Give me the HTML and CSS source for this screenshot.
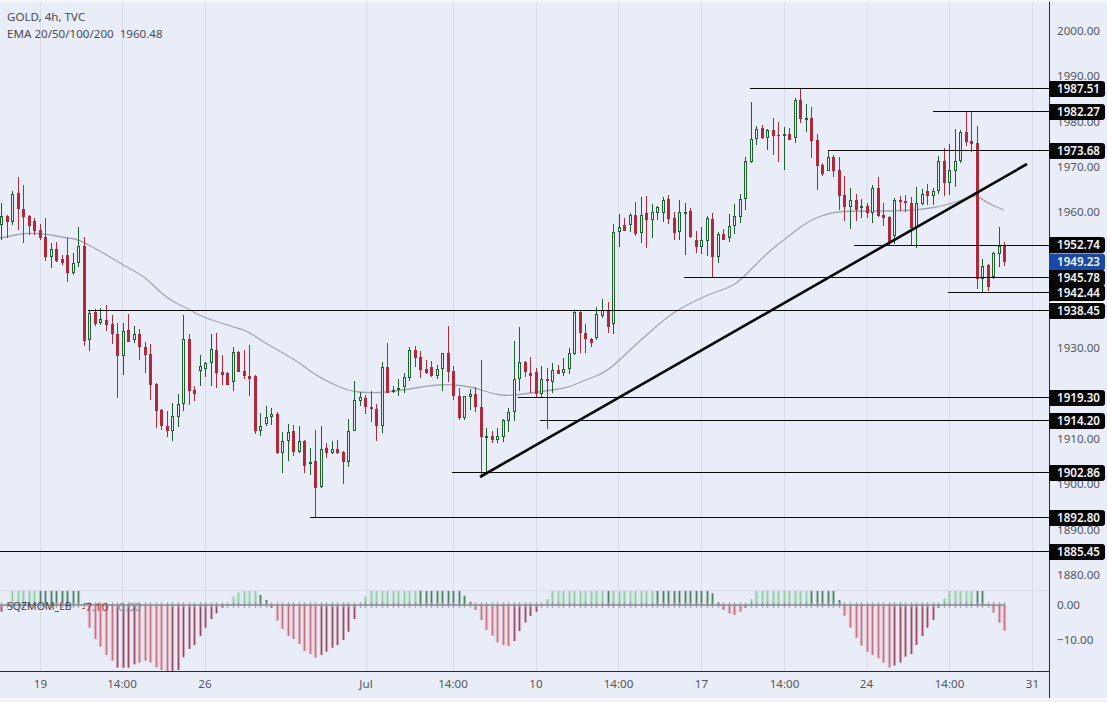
FILE: index.html
```html
<!DOCTYPE html>
<html lang="en">
<head>
<meta charset="utf-8">
<title>GOLD, 4h, TVC</title>
<link rel="stylesheet" href="styles.css">
</head>
<body>
<main class="chart">
  <section class="plot">
    <svg id="plot-svg" class="plot-svg" viewBox="0 2 1049 669" width="1049" height="669" xmlns="http://www.w3.org/2000/svg">
      <g id="grid" class="grid"></g>
      <path class="grid" d="M0 590.5H1049"/>
      <g id="hist"></g>
      <path id="ema" class="ema"/>
      <g id="wicks"></g>
      <g id="bodies"></g>
      <g id="levels" class="level"></g>
      <path class="trend" d="M480 477L1027 164"/>
    </svg>
    <div class="legend">
      <div class="legend-line">GOLD, 4h, TVC</div>
      <div class="legend-line">EMA 20/50/100/200&nbsp; 1960.48</div>
    </div>
    <div class="osc-legend"><span class="osc-name">SQZMOM_LB</span><span class="osc-red">-7.10</span><span class="osc-gray">0.00</span></div>
  </section>
  <aside class="price-axis">
    <span class="tick" style="top:29px">2000.00</span>
    <span class="tick" style="top:74px">1990.00</span>
    <span class="tick" style="top:120px">1980.00</span>
    <span class="tick" style="top:165px">1970.00</span>
    <span class="tick" style="top:210px">1960.00</span>
    <span class="tick" style="top:346px">1930.00</span>
    <span class="tick" style="top:437px">1910.00</span>
    <span class="tick" style="top:482px">1900.00</span>
    <span class="tick" style="top:528px">1890.00</span>
    <span class="tick" style="top:573px">1880.00</span>
    <span class="tick" style="top:603px">0.00</span>
    <span class="tick" style="top:638px">−10.00</span>
    <span class="flag" style="top:87px">1987.51</span>
    <span class="flag" style="top:109.5px">1982.27</span>
    <span class="flag" style="top:148.5px">1973.68</span>
    <span class="flag" style="top:243px">1952.74</span>
    <span class="flag flag-last" style="top:259.5px">1949.23</span>
    <span class="flag" style="top:275.5px">1945.78</span>
    <span class="flag" style="top:290.5px">1942.44</span>
    <span class="flag flag-ring" style="top:309px">1938.45</span>
    <span class="flag" style="top:395.5px">1919.30</span>
    <span class="flag" style="top:419px">1914.20</span>
    <span class="flag" style="top:470.5px">1902.86</span>
    <span class="flag" style="top:515.5px">1892.80</span>
    <span class="flag" style="top:549.5px">1885.45</span>
  </aside>
  <footer class="time-axis">
    <span class="time" style="left:40.5px">19</span>
    <span class="time" style="left:122px">14:00</span>
    <span class="time" style="left:205px">26</span>
    <span class="time" style="left:366px">Jul</span>
    <span class="time" style="left:453px">14:00</span>
    <span class="time" style="left:536px">10</span>
    <span class="time" style="left:618.5px">14:00</span>
    <span class="time" style="left:701.5px">17</span>
    <span class="time" style="left:784.5px">14:00</span>
    <span class="time" style="left:866.5px">24</span>
    <span class="time" style="left:949.5px">14:00</span>
    <span class="time" style="left:1032.5px">31</span>
  </footer>
</main>
<script src="chart.js"></script>
</body>
</html>
```
FILE: styles.css
```css
* { box-sizing: border-box; }
html, body { margin: 0; padding: 0; }
body {
  width: 1107px;
  height: 702px;
  overflow: hidden;
  background: #f5f6fa;
  padding-top: 2px;
  font-family: "Noto Sans", "Open Sans", sans-serif;
}
.chart {
  display: grid;
  grid-template-columns: 1049px 58px;
  grid-template-rows: 669px 27px;
  height: 696px;
  background: #e9edf8;
}
.plot { position: relative; }
.plot-svg { display: block; }
.grid { fill: none; stroke: #d8dde9; stroke-width: 1; }
.ema { fill: none; stroke: #a3a5ae; stroke-width: 1.3; stroke-linejoin: round; }
.level { stroke: #0b0b0b; stroke-width: 1.2; }
.trend { fill: none; stroke: #0a0a0a; stroke-width: 2.6; }
.wick-up { stroke: #1f5f2e; stroke-width: 1; }
.wick-down { stroke: #b0293a; stroke-width: 1; }
.body-down { fill: #b0293a; }
.body-up { fill: #e4ecf2; stroke: #1f5f2e; stroke-width: 1; }
.hist-bar { stroke-width: 1.8; }
.zero { stroke: #8f9098; fill: none; }
.legend {
  position: absolute;
  left: 7px;
  top: 6px;
  color: #4c4c50;
  font-size: 11.6px;
  line-height: 17px;
}
.osc-legend {
  position: absolute;
  left: 7px;
  top: 596px;
  display: flex;
  gap: 10px;
  color: #45454a;
  font-size: 11.5px;
  line-height: 17px;
}
.osc-name { font-size: 10.6px; }
.osc-red { color: #a8323f; }
.osc-gray { color: #8b8c92; }
.price-axis {
  position: relative;
  border-left: 1px solid #2b2b30;
  grid-row: 1 / span 2;
  grid-column: 2;
}
.tick {
  position: absolute;
  left: 7px;
  transform: translateY(-50%);
  color: #55565b;
  font-size: 11.6px;
  line-height: 16px;
}
.flag {
  position: absolute;
  left: -1px;
  width: 56px;
  height: 16px;
  transform: translateY(-50%);
  background: #050505;
  border-radius: 0 3px 3px 0;
  color: #f4f4f4;
  font-size: 11.6px;
  font-weight: 600;
  line-height: 16px;
  padding-left: 8px;
}
.flag-last { height: 17px; background: #1a48a5; }
.flag-ring { box-shadow: 0 -1px 0 #fff; }
.time-axis {
  position: relative;
  border-top: 1px solid #2b2b30;
  grid-column: 1;
  grid-row: 2;
}
.time {
  position: absolute;
  top: 4px;
  transform: translateX(-50%);
  color: #55565b;
  font-size: 11.6px;
  line-height: 16px;
}
```
FILE: chart.js
```js
var NS = "http://www.w3.org/2000/svg";
function el(parent, name, attrs) {
  var n = document.createElementNS(NS, name);
  for (var k in attrs) n.setAttribute(k, attrs[k]);
  parent.appendChild(n);
  return n;
}
/* direction, wick top, body top, body bottom, wick bottom */
var candles = [
["u",203,216,225,240],["d",215,216,222,238],["u",191,194,222,225],["d",177,193,209,230],["d",185,209,217,243],["d",215,216,226,235],["d",218,221,231,235],["d",224,230,238,240],["d",218,237,257,261],["u",243,249,257,268],
["d",242,249,261,262],["d",255,259,263,265],["d",238,255,273,282],["u",253,263,273,275],["u",227,246,263,267],["d",237,246,341,346],["u",310,313,340,351],["d",309,312,324,326],["u",308,319,323,325],["d",305,320,325,331],
["d",315,324,334,344],["d",323,334,356,398],["u",323,331,356,375],["d",314,330,342,342],["u",326,334,340,343],["d",329,334,347,360],["d",342,347,355,373],["d",344,354,385,400],["d",383,384,411,428],["d",409,410,426,430],
["d",411,426,431,437],["u",403,416,431,441],["u",394,404,417,427],["u",315,339,404,411],["d",334,339,391,405],["d",386,390,394,401],["u",355,366,371,386],["u",362,363,369,377],["u",334,349,363,386],["d",333,350,373,388],
["d",355,372,375,385],["d",372,373,385,385],["u",347,352,382,391],["d",351,352,372,372],["d",350,371,376,379],["d",345,376,379,396],["d",375,376,431,434],["u",413,426,431,436],["u",406,417,424,426],["u",408,414,417,425],
["d",412,414,453,454],["u",432,441,453,473],["u",424,432,441,461],["d",425,431,452,456],["u",426,441,452,453],["d",440,441,466,473],["u",448,462,464,475],["d",430,461,488,517],["u",426,449,487,488],["d",443,448,453,458],
["u",441,449,453,454],["d",440,449,453,454],["d",451,452,462,484],["u",419,431,462,467],["u",381,400,431,431],["u",392,397,401,406],["d",395,398,407,414],["d",391,407,409,422],["d",404,409,426,441],["u",362,367,426,433],
["d",343,367,393,393],["u",386,390,392,393],["u",379,388,390,396],["u",373,377,387,393],["u",347,350,378,381],["d",346,350,358,367],["d",351,357,370,378],["d",360,369,373,374],["d",361,367,376,377],["u",365,369,376,379],
["u",353,353,369,391],["d",326,353,372,382],["d",366,371,396,400],["d",388,396,418,420],["u",396,396,418,420],["u",389,394,397,410],["d",387,394,407,412],["d",360,407,437,477],["u",428,436,437,474],["d",431,436,440,443],
["u",428,436,440,443],["u",419,420,437,442],["u",408,412,421,432],["u",341,379,412,421],["u",327,362,379,391],["d",361,362,372,377],["d",357,373,376,393],["d",368,372,394,397],["u",366,379,394,398],["d",368,379,381,429],
["u",363,370,382,393],["d",365,370,374,374],["u",358,369,373,376],["u",348,353,369,374],["u",311,312,354,355],["d",310,312,333,353],["d",324,333,339,353],["d",338,339,343,347],["u",307,314,338,340],["u",299,310,316,318],
["d",302,310,327,333],["u",224,232,324,334],["u",214,227,232,247],["d",218,225,231,231],["u",213,215,225,232],["d",202,215,234,236],["u",197,215,233,243],["d",196,213,220,248],["u",204,212,220,238],["u",206,207,213,220],
["u",197,200,213,222],["d",195,199,219,224],["d",212,218,233,240],["u",200,212,232,240],["u",203,212,213,255],["d",208,211,237,238],["d",231,240,247,253],["u",227,240,247,254],["u",216,218,241,256],["d",213,219,257,278],
["u",232,234,257,263],["d",229,234,240,240],["u",214,226,238,242],["u",204,216,226,234],["u",194,199,217,223],["u",157,161,199,210],["u",102,139,162,163],["u",126,129,139,145],["d",125,128,138,139],["u",129,130,138,150],
["d",118,130,136,155],["d",122,135,136,162],["u",127,134,136,170],["d",128,134,140,140],["u",98,100,138,143],["d",88,100,119,123],["u",104,118,119,132],["d",107,118,141,158],["d",134,140,166,190],["d",163,165,174,176],
["u",150,157,171,171],["d",155,157,171,177],["d",157,170,196,210],["d",176,195,207,221],["u",188,200,207,229],["d",194,200,210,221],["u",199,206,208,218],["d",203,206,213,218],["u",185,188,213,223],["d",177,188,216,217],
["d",203,215,218,226],["d",216,217,243,245],["u",198,200,236,244],["d",196,200,202,211],["d",195,201,203,212],["d",197,203,228,245],["u",187,203,228,248],["u",189,194,204,205],["d",184,191,196,205],["u",188,191,196,205],
["u",156,161,191,194],["d",148,161,183,196],["u",144,170,183,195],["u",129,161,171,187],["u",130,132,161,163],["d",112,132,142,146],["d",112,141,144,152],["d",126,143,279,289],["u",259,266,279,293],["d",264,265,287,291],
["u",252,253,277,279],["u",227,246,254,267],["d",242,246,262,266]
];
var STEP = 5.511, X0 = 1.3;
function cx(i) { return Math.round(X0 + STEP * i) + 0.5; }

var wicks = document.getElementById("wicks");
var bodies = document.getElementById("bodies");
candles.forEach(function (c, i) {
  var x = cx(i), up = c[0] === "u";
  el(wicks, "line", { x1: x, x2: x, y1: c[1], y2: c[4], "class": up ? "wick-up" : "wick-down" });
  if (up) {
    el(bodies, "rect", { x: x - 1, y: c[2] + 0.5, width: 2, height: Math.max(c[3] - c[2] - 1, 1), "class": "body-up" });
  } else {
    el(bodies, "rect", { x: x - 1.5, y: c[2], width: 3, height: Math.max(c[3] - c[2], 1), "class": "body-down" });
  }
});

var gridX = [40.5, 122.5, 205.5, 366.5, 453.5, 536.5, 618.5, 701.5, 784.5, 867, 949.5, 1032.5];
var grid = document.getElementById("grid");
gridX.forEach(function (x) { el(grid, "line", { x1: x, x2: x, y1: 2, y2: 671 }); });

var levels = [[750,88.5],[933,111.5],[828,150.5],[854,245.5],[684,277.5],[948,292.5],[88,310.5],[518,397.5],[540,420.5],[452,472.5],[310,517.5],[0,551.5]];
var lv = document.getElementById("levels");
levels.forEach(function (l) { el(lv, "line", { x1: l[0], x2: 1049, y1: l[1], y2: l[1] }); });

var emaPts = [[0,238],[7,237],[23,233],[47,234],[67,238],[78,239],[107,255],[123,265],[145,277],[160,292],[173,302],[187,308],[200,316],[227,325],[248,331],[260,340],[283,353],[300,363],[315,375],[347,391],[370,393],[387,392],[410,389],[427,386],[448,384],[473,387],[493,394],[510,396],[537,392],[567,388],[583,381],[607,372],[633,347],[667,317],[683,307],[707,295],[728,288],[740,281],[767,253],[790,235],[810,220],[833,212],[853,211],[890,211],[920,210],[947,205],[967,198],[977,195],[987,203],[1004,210]];
var d = "M" + emaPts[0].join(" ");
for (var e = 1; e < emaPts.length - 1; e++) {
  var mx = (emaPts[e][0] + emaPts[e + 1][0]) / 2, my = (emaPts[e][1] + emaPts[e + 1][1]) / 2;
  d += "Q" + emaPts[e].join(" ") + " " + mx + " " + my;
}
d += "L" + emaPts[emaPts.length - 1].join(" ");
document.getElementById("ema").setAttribute("d", d);

/* oscillator: end of each bar, read per candle */
var ZERO = 605, TOP = 591;
var hist = [];
function setRange(a, b, y) { for (var i = a; i <= b; i++) hist[i] = y; }
function setList(a, list) { list.forEach(function (z, k) { hist[a + k] = 580 + z / 3; }); }
setList(0, [95, 75]);
setRange(2, 14, TOP);
setList(15, [70,143,177,200,225,242,263,263,263,253,248,242,248,262,270,273,273,270,232,207,195,168,143,117,100,83,75,50,37,33,33,33,45,60,83,122,147,168,177,192,213,222,233,225,215,203,195,180,155,117,75,50]);
setRange(67, 83, TOP);
setList(84, [47,65,90,120,150,167,187,195,198,183,153,128,108,95,75,57]);
setRange(100, 128, TOP);
setList(129, [40,67,90,100,105,95,83,57]);
setRange(137, 151, TOP);
setList(152, [60,107,143,173,197,215,225,235,248,263,257,248,230,222,195,168,143,120,83,55]);
setRange(172, 178, TOP);
setList(179, [75,98,128,152]);

function inRanges(i, r) { return r.some(function (p) { return i >= p[0] && i <= p[1]; }); }
var darkRanges = [[0,1],[7,15],[21,24],[31,41],[47,49],[58,65],[76,85],[93,98],[110,110],[119,130],[135,135],[147,152],[162,170],[177,179]];
var g = document.getElementById("hist");
hist.forEach(function (y, i) {
  var x = cx(i), up = y < ZERO, dark = inRanges(i, darkRanges);
  var h = Math.abs(y - ZERO);
  if (h < 1) return;
  el(g, "rect", {
    x: x - STEP / 2, width: STEP, y: Math.min(y, ZERO), height: h,
    fill: up ? "#6fcf97" : "#ef7f9f", "fill-opacity": dark ? 0.05 : 0.11
  });
});
hist.forEach(function (y, i) {
  var x = cx(i), up = y < ZERO, dark = inRanges(i, darkRanges);
  var color = up ? (dark ? "#4f7f62" : "#97cca6") : (dark ? "#954a60" : "#c8727f");
  el(g, "line", { x1: x, x2: x, y1: y, y2: ZERO, stroke: color, "class": "hist-bar" });
});
el(g, "path", { d: "M0 605H1005", "class": "zero", "stroke-width": 2, "stroke-opacity": 0.85 });
hist.forEach(function (y, i) {
  var x = cx(i);
  el(g, "line", { x1: x, x2: x, y1: 602, y2: 608, "class": "zero", "stroke-width": 1.4, "stroke-opacity": 0.7 });
});
```
